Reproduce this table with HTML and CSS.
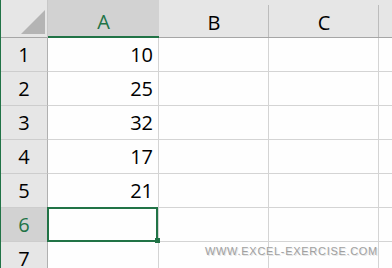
FILE: index.html
```html
<!DOCTYPE html>
<html>
<head>
<meta charset="utf-8">
<link rel="stylesheet" href="styles.css">
</head>
<body>
<div class="sheet">
  <div class="corner"><svg class="tri" width="24" height="24" viewBox="0 0 24 24"><polygon points="24,0 24,24 0,24" fill="#b4b4b4"/></svg></div>
  <div class="colhead active">A</div>
  <div class="colhead">B</div>
  <div class="colhead">C</div>
  <div class="colhead last"></div>

  <div class="rowhead">1</div><div class="cell num">10</div><div class="cell"></div><div class="cell"></div><div class="cell last"></div>
  <div class="rowhead">2</div><div class="cell num">25</div><div class="cell"></div><div class="cell"></div><div class="cell last"></div>
  <div class="rowhead">3</div><div class="cell num">32</div><div class="cell"></div><div class="cell"></div><div class="cell last"></div>
  <div class="rowhead">4</div><div class="cell num">17</div><div class="cell"></div><div class="cell"></div><div class="cell last"></div>
  <div class="rowhead">5</div><div class="cell num">21</div><div class="cell"></div><div class="cell"></div><div class="cell last"></div>
  <div class="rowhead active">6</div><div class="cell selected"><span class="handle"></span></div><div class="cell"></div><div class="cell"></div><div class="cell last"></div>
  <div class="rowhead">7</div><div class="cell"></div><div class="cell"></div><div class="cell"></div><div class="cell last"></div>
</div>
<div class="watermark">WWW.EXCEL-EXERCISE.COM</div>
</body>
</html>
```

FILE: styles.css
```css
html, body {
  margin: 0;
  padding: 0;
  width: 392px;
  height: 268px;
  overflow: hidden;
  background: #ffffff;
}
body {
  position: relative;
  font-family: "Open Sans", "Noto Sans", sans-serif;
  font-size: 20px;
  color: #000;
}
.sheet {
  display: grid;
  grid-template-columns: 47px 111px 110px 110px 1fr;
  grid-template-rows: 38px;
  grid-auto-rows: 34px;
  border-left: 1px solid #217346;
  box-sizing: border-box;
  width: 392px;
}
.corner {
  background: #e6e6e6;
  border-right: 1px solid #c8c8c8;
  border-bottom: 1px solid #a6a6a6;
  box-sizing: border-box;
  display: flex;
  justify-content: flex-end;
  align-items: flex-end;
  padding: 0 2px 3px 0;
}
.tri { display: block; }
.colhead {
  position: relative;
  background: #e6e6e6;
  border-bottom: 1px solid #a6a6a6;
  box-sizing: border-box;
  display: flex;
  align-items: center;
  justify-content: center;
  padding-top: 8px;
  line-height: 20px;
  color: #000;
}
.colhead::after {
  content: "";
  position: absolute;
  right: 0;
  top: 5px;
  bottom: 0;
  width: 1px;
  background: #bcbcbc;
}
.colhead.last::after { display: none; }
.colhead.active {
  background: #d2d2d2;
  color: #217346;
  border-bottom: 2px solid #217346;
}
.colhead.active::after { background: #d2d2d2; }
.rowhead {
  background: #e6e6e6;
  border-right: 1px solid #b0b0b0;
  border-bottom: 1px solid #cdcdcd;
  box-sizing: border-box;
  display: flex;
  align-items: center;
  justify-content: center;
  line-height: 20px;
  color: #000;
}
.rowhead.active {
  background: #d2d2d2;
  color: #217346;
}
.cell {
  position: relative;
  background: #fefefe;
  border-right: 1px solid #d4d4d4;
  border-bottom: 1px solid #d4d4d4;
  box-sizing: border-box;
  display: flex;
  align-items: center;
  line-height: 20px;
}
.cell.last { border-right: none; }
.num {
  justify-content: flex-end;
  padding-right: 5px;
}
.selected::after {
  content: "";
  position: absolute;
  top: -1px;
  left: -1px;
  right: 0;
  bottom: -1px;
  border: 2px solid #217346;
}
.handle {
  position: absolute;
  right: -2px;
  bottom: -2px;
  width: 5px;
  height: 5px;
  background: #217346;
  z-index: 2;
}
.watermark {
  position: absolute;
  right: 14px;
  top: 246px;
  font-family: "Liberation Sans", Arial, sans-serif;
  font-size: 11px;
  line-height: 11px;
  letter-spacing: 0.7px;
  color: #a0a0a0;
  text-shadow: 1px 1px 0 #e4e4e4;
}
```
